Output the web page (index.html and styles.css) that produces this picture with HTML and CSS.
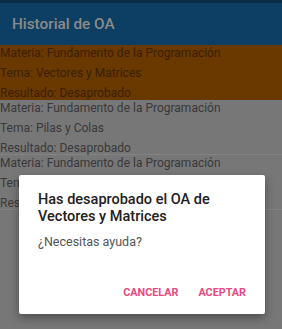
FILE: index.html
```html
<!DOCTYPE html>
<html lang="es">
<head>
<meta charset="utf-8">
<title>Historial de OA</title>
<link rel="stylesheet" href="styles.css">
</head>
<body>
<div class="screen">
  <div class="statusbar"></div>
  <header class="appbar"><h1 class="appbar-title">Historial de OA</h1></header>
  <ul class="list">
    <li class="item item-failed">
      <p class="line">Materia: Fundamento de la Programación</p>
      <p class="line">Tema: Vectores y Matrices</p>
      <p class="line">Resultado: Desaprobado</p>
    </li>
    <li class="item">
      <p class="line">Materia: Fundamento de la Programación</p>
      <p class="line">Tema: Pilas y Colas</p>
      <p class="line">Resultado: Desaprobado</p>
    </li>
    <li class="item">
      <p class="line">Materia: Fundamento de la Programación</p>
      <p class="line">Tema: Árboles</p>
      <p class="line">Resultado: Desaprobado</p>
    </li>
  </ul>
  <div class="scrim">
    <div class="dialog">
      <h2 class="dialog-title">Has desaprobado el OA de Vectores y Matrices</h2>
      <p class="dialog-body">¿Necesitas ayuda?</p>
      <div class="dialog-actions">
        <button class="btn">CANCELAR</button>
        <button class="btn">ACEPTAR</button>
      </div>
    </div>
  </div>
</div>
</body>
</html>
```
FILE: styles.css
```css
html, body {
  margin: 0;
  padding: 0;
}
body {
  font-family: Roboto, "Liberation Sans", sans-serif;
  background: #777777;
}
.screen {
  position: relative;
  width: 282px;
  height: 329px;
  overflow: hidden;
  background: #777777;
}
.statusbar {
  height: 3px;
  background: #0a2c47;
}
.appbar {
  height: 42px;
  background: #0d3e63;
  display: flex;
  align-items: center;
  padding-left: 12px;
}
.appbar-title {
  margin: 0;
  font-size: 15.3px;
  font-weight: 500;
  color: #8b8b8b;
}
.list {
  list-style: none;
  margin: 0;
  padding: 0;
}
.item {
  height: 55px;
  box-sizing: border-box;
  border-bottom: 1px solid #838383;
  display: flex;
  flex-direction: column;
  justify-content: flex-start;
}
.item-failed {
  background: #6a3900;
  border-bottom-color: #6a3900;
}
.line {
  margin: 0;
  font-size: 12px;
  line-height: 20px;
  height: 20px;
  margin-top: -2px;
  margin-bottom: 2px;
  color: #393939;
  white-space: nowrap;
}
.item-failed .line {
  color: #3a2000;
}
.scrim {
  position: absolute;
  top: 0;
  left: 0;
  width: 100%;
  height: 100%;
}
.dialog {
  position: absolute;
  left: 19px;
  top: 175px;
  width: 246px;
  height: 139px;
  box-sizing: border-box;
  background: #ffffff;
  border-radius: 2px;
  box-shadow: 0 4px 10px rgba(0, 0, 0, 0.35);
  padding: 17px 19px 0 19px;
  display: flex;
  flex-direction: column;
}
.dialog-title {
  margin: 0;
  font-size: 14.5px;
  font-weight: 500;
  line-height: 16.5px;
  color: #212121;
}
.dialog-body {
  margin: 8px 0 0 0;
  font-size: 12.5px;
  line-height: 17px;
  color: #555555;
}
.dialog-actions {
  margin-top: auto;
  margin-bottom: 14px;
  display: flex;
  justify-content: flex-end;
  gap: 20px;
}
.btn {
  border: none;
  background: none;
  padding: 0;
  font-family: Roboto, "Liberation Sans", sans-serif;
  font-size: 10.8px;
  font-weight: 700;
  color: #e84a7f;
  line-height: 14px;
}
```
